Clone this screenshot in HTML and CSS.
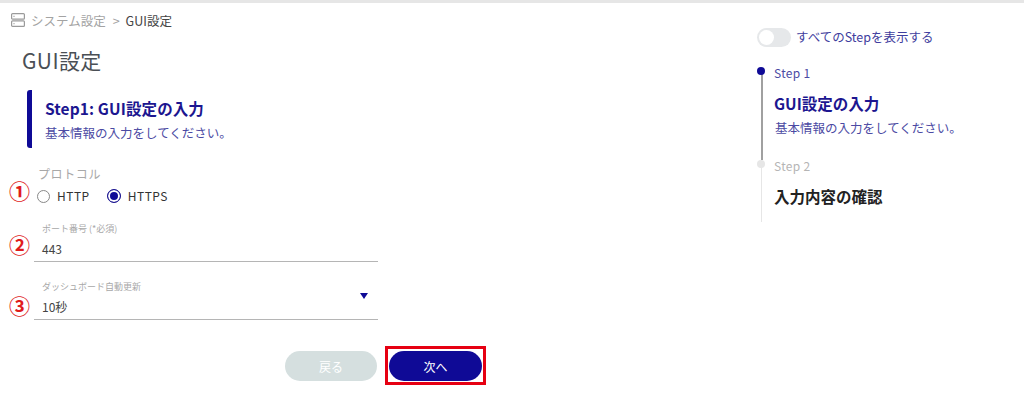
FILE: index.html
```html
<!DOCTYPE html>
<html lang="ja">
  <head>
    <meta charset="UTF-8" />
    <meta name="viewport" content="width=device-width, initial-scale=1.0" />
    <title>GUI設定</title>
    <link rel="stylesheet" href="styles.css">
  </head>
  <body>
    <div class="faixa-topo"></div>

    <div class="pagina">
      <div class="conteudo">
        <div class="migalhas">
          <svg class="migalhas-icone" width="14" height="14" viewBox="0 0 14 14" fill="none" stroke="#9a9a9a" stroke-width="1.2">
            <rect x="0.6" y="0.6" width="12.8" height="5.6" rx="1" />
            <rect x="0.6" y="7.8" width="12.8" height="5.6" rx="1" />
            <path d="M2.5 3.4h1M2.5 10.6h1" />
          </svg>
          <span class="migalhas-pai">システム設定</span>
          <span class="migalhas-sep">&gt;</span>
          <span class="migalhas-atual">GUI設定</span>
        </div>

        <h1 class="titulo">GUI設定</h1>

        <div class="passo">
          <h2>Step1: GUI設定の入力</h2>
          <p>基本情報の入力をしてください。</p>
        </div>

        <form class="formulario">
          <div class="grupo-protocolo">
            <span class="marca marca-1">①</span>
            <div class="protocolo-titulo">プロトコル</div>
            <div class="radios">
              <label class="radio"><span class="radio-bola"></span>HTTP</label>
              <label class="radio"><span class="radio-bola ativo"></span>HTTPS</label>
            </div>
          </div>

          <div class="campo campo-porta">
            <span class="marca marca-2">②</span>
            <div class="campo-label">ポート番号 (*必須)</div>
            <div class="campo-valor">443</div>
          </div>

          <div class="campo campo-auto">
            <span class="marca marca-3">③</span>
            <div class="campo-label">ダッシュボード自動更新</div>
            <div class="campo-valor">10秒</div>
            <span class="seta-select"></span>
          </div>
        </form>

        <div class="botoes">
          <button class="btn-voltar" type="button">戻る</button>
          <div class="moldura-vermelha">
            <button class="btn-proximo" type="button">次へ</button>
          </div>
        </div>
      </div>

      <aside class="lateral">
        <div class="alternar">
          <span class="alternar-trilho"><span class="alternar-bola"></span></span>
          <span class="alternar-texto">すべてのStepを表示する</span>
        </div>

        <div class="etapa etapa-ativa">
          <div class="etapa-nome">Step 1</div>
          <div class="etapa-titulo">GUI設定の入力</div>
          <div class="etapa-desc">基本情報の入力をしてください。</div>
        </div>
        <div class="etapa etapa-proxima">
          <div class="etapa-nome">Step 2</div>
          <div class="etapa-titulo">入力内容の確認</div>
        </div>
      </aside>
    </div>
  </body>
</html>
```

FILE: styles.css
```css
* {
  margin: 0;
  padding: 0;
  box-sizing: border-box;
}

body {
  background-color: white;
  font-family: "Noto Sans CJK JP", "Noto Sans", sans-serif;
  color: #333;
  height: 402px;
  overflow: hidden;
}

.faixa-topo {
  height: 3px;
  background-color: #e6e6e6;
}

.pagina {
  display: flex;
}

.conteudo {
  width: 757px;
  padding: 7px 0 0 11px;
}

/* Migalhas */
.migalhas {
  display: flex;
  align-items: center;
  height: 20px;
  font-size: 12.5px;
}

.migalhas-icone {
  margin-right: 6px;
}

.migalhas-pai {
  color: #a3a3a3;
}

.migalhas-sep {
  color: #a3a3a3;
  margin: 0 6px 0 7px;
}

.migalhas-atual {
  color: #444;
}

.titulo {
  font-size: 21px;
  font-weight: 400;
  line-height: 30px;
  color: #4a4f55;
  margin: 15px 0 0 11px;
  letter-spacing: 0.4px;
}

/* Bloco do passo */
.passo {
  margin: 15px 0 0 16px;
  height: 58px;
  padding: 7px 0 0 13px;
  border-left: 5px solid #0f0a96;
  border-radius: 3px;
  color: #1c1690;
}

.passo h2 {
  font-size: 15.5px;
  font-weight: 700;
  line-height: 22px;
  letter-spacing: 0.1px;
}

.passo p {
  font-size: 12.5px;
  line-height: 18px;
  margin-top: 5px;
  color: #4b4aa3;
}

/* Formulario */
.formulario {
  margin-top: 17px;
  width: 367px;
  padding-left: 23px;
}

.grupo-protocolo,
.campo {
  position: relative;
}

.marca {
  position: absolute;
  left: -25px;
  font-size: 21px;
  font-weight: 700;
  line-height: 24px;
  color: #e01b1b;
}

.marca-1 {
  top: 13px;
}

.marca-2 {
  top: 10px;
}

.marca-3 {
  top: 13px;
}

.protocolo-titulo {
  font-size: 12px;
  line-height: 18px;
  color: #a8a8a8;
  margin-left: 4px;
  letter-spacing: 0.6px;
}

.radios {
  display: flex;
  gap: 17px;
  margin-top: 4px;
  margin-left: 3px;
}

.radio {
  display: flex;
  align-items: center;
  gap: 7px;
  font-size: 12px;
  line-height: 18px;
  letter-spacing: 0.5px;
  color: #333;
}

.radio-bola {
  width: 13px;
  height: 13px;
  border: 1px solid #888;
  border-radius: 50%;
}

.radio-bola.ativo {
  width: 14px;
  height: 14px;
  border-color: #1c1690;
  background-color: #0f0a96;
  box-shadow: inset 0 0 0 2px white;
}

.campo {
  border-bottom: 1px solid #b5b5b5;
  padding-left: 8px;
  width: 344px;
}

.campo-porta {
  margin-top: 17px;
  height: 40px;
}

.campo-auto {
  margin-top: 18px;
  height: 40px;
}

.campo-label {
  font-size: 9px;
  line-height: 14px;
  color: #a8a8a8;
}

.campo-valor {
  font-size: 12px;
  line-height: 18px;
  margin-top: 4px;
  color: #444;
}

.seta-select {
  position: absolute;
  right: 10px;
  top: 13px;
  width: 0;
  height: 0;
  border-left: 4px solid transparent;
  border-right: 4px solid transparent;
  border-top: 6px solid #0f0a96;
}

/* Botoes */
.botoes {
  display: flex;
  align-items: flex-start;
  margin: 26px 0 0 274px;
  gap: 8px;
}

.botoes button {
  display: block;
  width: 93px;
  height: 30px;
  border: none;
  border-radius: 15px;
  font-family: inherit;
  font-size: 12px;
  color: white;
}

.botoes .btn-voltar {
  margin-top: 5px;
  width: 92px;
  background-color: #d5dfdf;
}

.btn-proximo {
  background-color: #0f0a96;
}

.moldura-vermelha {
  border: 3px solid #e60012;
  padding: 2px 1px 1px;
}

/* Lateral */
.lateral {
  width: 230px;
  padding-top: 24px;
}

.alternar {
  display: flex;
  align-items: center;
  gap: 5px;
  height: 20px;
}

.alternar-trilho {
  display: block;
  width: 34px;
  height: 19px;
  padding: 2px;
  border-radius: 10px;
  background-color: #e6e8ea;
}

.alternar-bola {
  display: block;
  width: 15px;
  height: 15px;
  border-radius: 50%;
  background-color: white;
}

.alternar-texto {
  font-size: 12.5px;
  line-height: 18px;
  color: #3f3e9e;
}

.etapa {
  position: relative;
  margin-left: 4px;
  padding-left: 13px;
}

/* bolinha da etapa */
.etapa::before {
  content: "";
  position: absolute;
  top: 3px;
  left: -4px;
  width: 8px;
  height: 8px;
  border-radius: 50%;
  z-index: 1;
}

/* linha vertical ate a proxima etapa */
.etapa::after {
  content: "";
  position: absolute;
  top: 7px;
  bottom: -3px;
  left: 0;
  width: 1px;
}

.etapa-ativa {
  margin-top: 17px;
  height: 93px;
}

.etapa-ativa::before {
  background-color: #0f0a96;
}

.etapa-ativa::after {
  width: 2px;
  background-color: #a0a0a0;
}

.etapa-proxima {
  height: 65px;
}

.etapa-proxima::before {
  background-color: #e6e6e6;
}

.etapa-proxima::after {
  bottom: 0;
  background-color: #e6e6e6;
}

.etapa-nome {
  font-size: 12px;
  line-height: 18px;
  letter-spacing: 0.3px;
  color: #4b4aa3;
}

.etapa-titulo {
  font-size: 15.5px;
  font-weight: 700;
  line-height: 20px;
  margin-top: 11px;
  color: #1c1690;
}

.etapa-desc {
  font-size: 12.5px;
  line-height: 18px;
  margin-top: 6px;
  margin-left: 1px;
  color: #4b4aa3;
}

.etapa-proxima .etapa-nome {
  color: #b5b5b5;
}

.etapa-proxima .etapa-titulo {
  color: #222;
}
```
